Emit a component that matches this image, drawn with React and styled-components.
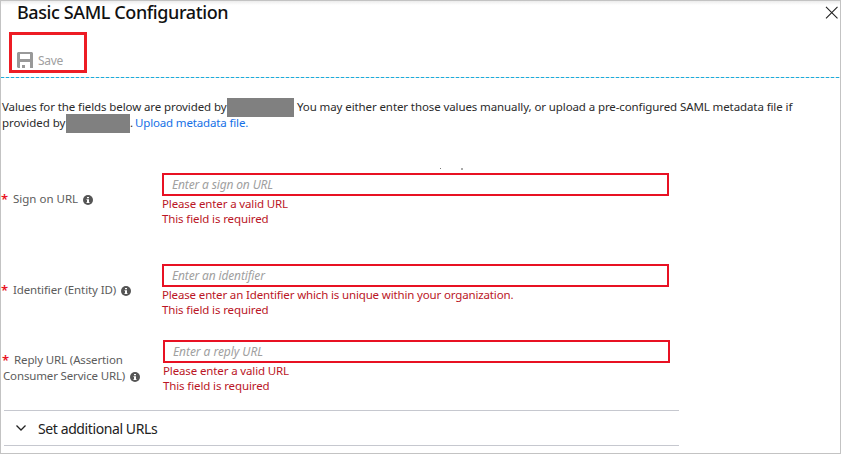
import React from "react";
import styled, { createGlobalStyle } from "styled-components";

const GlobalStyle = createGlobalStyle`
  * { box-sizing: border-box; }
  body { margin: 0; background: #fff; font-family: "Noto Sans", "Open Sans", sans-serif; }
`;

const Panel = styled.main`
  width: 841px;
  height: 454px;
  border: 1px solid #c3c3c3;
  background: linear-gradient(#ececec, #fff 4px);
  display: flex;
  flex-direction: column;
  overflow: hidden;
`;
const Header = styled.header`
  height: 31px;
  flex: none;
  display: flex;
  justify-content: space-between;
  padding: 0 1px 0 16px;
`;
const Title = styled.h1`
  margin: 0;
  font-size: 18px;
  font-weight: 500;
  line-height: 22px;
  letter-spacing: -0.4px;
  color: #111;
  white-space: nowrap;
`;
const CloseButton = styled.button`
  border: 0;
  padding: 4px 0 0;
  background: none;
  width: 14px;
  height: 20px;
  svg { display: block; }
`;
const Toolbar = styled.div`
  height: 45px;
  flex: none;
  padding-left: 8px;
`;
const SaveButton = styled.button`
  display: flex;
  align-items: flex-end;
  gap: 5px;
  width: 78px;
  height: 41px;
  border: 3px solid #ed1c24;
  background: none;
  padding: 0 0 2px 5px;
  font-family: inherit;
  font-size: 12px;
  line-height: 14px;
  letter-spacing: -0.3px;
  color: #a0a0a0;
`;
const DashedRule = styled.div`
  height: 1px;
  flex: none;
  background: repeating-linear-gradient(90deg, #18aede 0 3px, #d5dde0 3px 5px);
`;
const Intro = styled.div`
  padding: 21px 0 0 1px;
  height: 95px;
  flex: none;
  font-size: 11.5px;
  color: #2b2b2b;
`;
const Line = styled.div`
  height: 16px;
  display: flex;
  align-items: center;
  line-height: 16px;
  white-space: pre;
`;
const Run = styled.span`
  letter-spacing: ${(p) => p.$track || 0}px;
  width: ${(p) => (p.$width ? `${p.$width}px` : "auto")};
`;
const Redacted = styled.span`
  width: ${(p) => p.$width}px;
  height: 19px;
  margin-right: ${(p) => p.$after}px;
  background: #808080;
  flex: none;
`;
const Link = styled.a`
  color: #1570e6;
  letter-spacing: ${(p) => p.$track}px;
`;
const Field = styled.section`
  display: flex;
  height: ${(p) => p.$height}px;
  flex: none;
  padding-left: ${(p) => p.$indent}px;
`;
const Label = styled.label`
  width: 160px;
  padding-top: ${(p) => p.$top}px;
  font-size: 11.5px;
  color: #5c5c5c;
`;
const Star = styled.span`
  color: #e81123;
  width: 12px;
  margin-left: -1px;
  font-size: 13px;
  font-weight: 600;
  line-height: 14px;
`;
const Info = styled.svg`
  margin: 2px 0 0 5px;
  flex: none;
`;
const Control = styled.div`
  width: 507px;
`;
const Input = styled.input`
  display: block;
  width: 507px;
  height: 23px;
  border: 2px solid #e81123;
  border-radius: 0;
  background: #fff;
  padding: 0 8px;
  font-family: inherit;
  font-size: 12px;
  letter-spacing: ${(p) => p.$track}px;
  &::placeholder { color: #a0a0a0; font-style: italic; opacity: 1; }
`;
const ErrorText = styled.div`
  font-size: 11.5px;
  line-height: 15px;
  color: #ba1626;
  white-space: nowrap;
  letter-spacing: ${(p) => p.$track}px;
`;
const Accordion = styled.button`
  width: 675px;
  height: 36px;
  flex: none;
  margin-left: 3px;
  padding: 0 0 0 12px;
  border: solid #c6c8cf;
  border-width: 1px 0;
  background: none;
  display: flex;
  align-items: center;
  gap: 12px;
  font-family: inherit;
  font-size: 14px;
  letter-spacing: -0.4px;
  color: #222;
`;
const Specks = styled.svg`
  position: absolute;
  left: 440px;
  top: 168px;
`;

const InfoIcon = () => (
  <Info width="10" height="10" viewBox="0 0 10 10">
    <circle cx="5" cy="5" r="5" fill="#555" />
    <path d="M4 2h2v1.3H4zM3.5 4.2H6v3h.6V8H3.4v-.8H4V5h-.5z" fill="#fff" />
  </Info>
);

const fields = [
  {
    height: 91, indent: 1, top: 18,
    lines: [["Sign on URL", 0]],
    hint: ["Enter a sign on URL", -0.15],
    errors: [["Please enter a valid URL", -0.13], ["This field is required", -0.12]],
  },
  {
    height: 76, indent: 1, top: 18,
    lines: [["Identifier (Entity ID)", -0.12]],
    hint: ["Enter an identifier", -0.15],
    errors: [["Please enter an Identifier which is unique within your organization.", -0.15], ["This field is required", -0.12]],
  },
  {
    height: 70, indent: 2, top: 12,
    lines: [["Reply URL (Assertion", -0.13], ["Consumer Service URL)", -0.15]],
    hint: ["Enter a reply URL", -0.06],
    errors: [["Please enter a valid URL", -0.13], ["This field is required", -0.12]],
  },
];

export default function App() {
  return (
    <Panel>
      <GlobalStyle />
      <Header>
        <Title>Basic SAML Configuration</Title>
        <CloseButton aria-label="Close">
          <svg width="14" height="14" viewBox="0 0 14 14">
            <path d="M1 .8l11.5 11.5M12.5.8L1 12.3" stroke="#222" strokeWidth="1.1" fill="none" />
          </svg>
        </CloseButton>
      </Header>
      <Toolbar>
        <SaveButton>
          <svg width="16" height="16" viewBox="0 0 16 16">
            <path fillRule="evenodd" fill="#999" d="M1 0h14l1 1v15h-3v-6H3v6H1l-1-1V1zM3 2v5h10V2z" />
            <path d="M5 13h3v3H5z" fill="#999" />
          </svg>
          Save
        </SaveButton>
      </Toolbar>
      <DashedRule />
      <Intro>
        <Line>
          <Run $width={225} $track={-0.1}>Values for the fields below are provided by</Run>
          <Redacted $width={67} $after={3} />
          <Run $track={-0.1}>You may either enter those values manually, or upload a pre-configured SAML metadata file if</Run>
        </Line>
        <Line>
          <Run $width={64} $track={0}>provided by</Run>
          <Redacted $width={64} $after={0} />
          <Run $width={5}>.</Run>
          <Link $track={-0.15}>Upload metadata file.</Link>
        </Line>
      </Intro>
      {fields.map((f) => (
        <Field key={f.hint[0]} $height={f.height} $indent={f.indent}>
          <Label $top={f.top}>
            {f.lines.map(([text, track], i) => (
              <Line key={text}>
                {i === 0 && <Star>*</Star>}
                <Run $track={track}>{text}</Run>
                {i === f.lines.length - 1 && <InfoIcon />}
              </Line>
            ))}
          </Label>
          <Control>
            <Input placeholder={f.hint[0]} $track={f.hint[1]} />
            {f.errors.map(([text, track]) => (
              <ErrorText key={text} $track={track}>{text}</ErrorText>
            ))}
          </Control>
        </Field>
      ))}
      <Accordion>
        <svg width="10" height="6" viewBox="0 0 10 6">
          <path d="M.5.5L5 5 9.5.5" fill="none" stroke="#222" strokeWidth="1.3" />
        </svg>
        Set additional URLs
      </Accordion>
      <Specks width="24" height="3">
        <path d="M0 0h1v1H0z" fill="#777" />
        <path d="M21 0h2v2h-2z" fill="#aaa" />
      </Specks>
    </Panel>
  );
}
